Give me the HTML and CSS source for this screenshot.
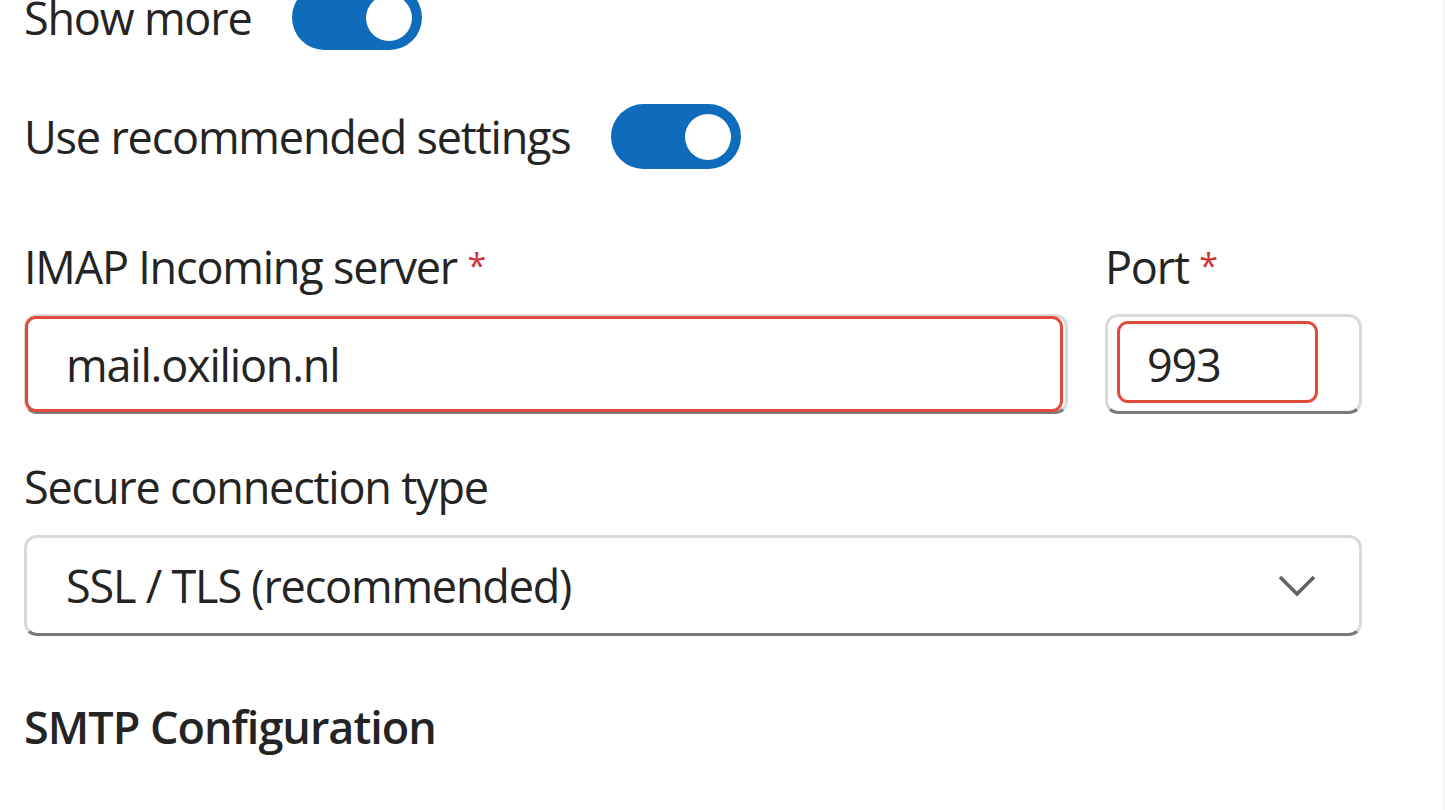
FILE: index.html
```html
<!DOCTYPE html>
<html lang="en">
<head>
  <meta charset="UTF-8" />
  <meta name="viewport" content="width=device-width, initial-scale=1.0">
  <title>Account settings</title>
  <link rel="stylesheet" href="styles.css">
</head>
<body>
  <div class="panel">
    <!-- Toggles -->
    <div class="toggle-row first">
      <span>Show more</span>
      <span class="toggle on"><span class="thumb"></span></span>
    </div>
    <div class="toggle-row">
      <span>Use recommended settings</span>
      <span class="toggle on"><span class="thumb"></span></span>
    </div>

    <!-- IMAP server + port -->
    <div class="field-row">
      <div class="field server">
        <label for="imap">IMAP Incoming server <span class="req">*</span></label>
        <div class="box">
          <input id="imap" type="text" value="mail.oxilion.nl">
          <span class="mark mark-server"></span>
        </div>
      </div>
      <div class="field port">
        <label for="port">Port <span class="req">*</span></label>
        <div class="box">
          <input id="port" type="text" value="993">
          <span class="mark mark-port"></span>
        </div>
      </div>
    </div>

    <!-- Connection type -->
    <div class="field conn">
      <label>Secure connection type</label>
      <div class="select">
        <span>SSL / TLS (recommended)</span>
        <svg width="40" height="24" viewBox="0 0 40 24"><path d="M3 3 L20 20 L37 3" fill="none" stroke="#616161" stroke-width="3.5"/></svg>
      </div>
    </div>

    <h3>SMTP Configuration</h3>
  </div>
</body>
</html>
```

FILE: styles.css
```css
* {
  box-sizing: border-box;
}
body {
  margin: 0;
  background: #fff;
  color: #242424;
  font-family: 'Open Sans', 'Noto Sans', sans-serif;
  font-size: 45px;
  letter-spacing: -1.2px;
  line-height: 64px;
  overflow: hidden;
  height: 810px;
  border-right: 2px solid #f4f4f4;
}
.panel {
  width: 1362px;
  padding-left: 24px;
}
.toggle-row {
  display: flex;
  align-items: center;
  gap: 40px;
  height: 65px;
  margin-top: 54px;
}
.toggle-row.first {
  margin-top: -15px;
}
.toggle {
  width: 130px;
  height: 65px;
  border-radius: 33px;
  background: #0f6cbd;
  display: flex;
  align-items: center;
  justify-content: flex-end;
  padding-right: 10px;
}
.thumb {
  width: 46px;
  height: 46px;
  border-radius: 50%;
  background: #fff;
}
.field-row {
  display: flex;
  gap: 37px;
  margin-top: 66px;
}
.field label {
  display: block;
  height: 64px;
  margin-bottom: 15px;
}
.server {
  width: 1044px;
}
.port {
  width: 257px;
}
.req {
  color: #d13438;
  font-size: 34px;
  line-height: 0;
  vertical-align: 6px;
}
.box {
  position: relative;
}
input, .select {
  display: block;
  width: 100%;
  height: 100px;
  border: 3px solid #dadada;
  border-bottom-color: #7a7a7a;
  border-radius: 13px;
  background: #fff;
  font: inherit;
  letter-spacing: inherit;
  color: #242424;
  padding: 0 0 0 39px;
  outline: none;
}
/* red annotation boxes drawn over the inputs */
.mark {
  position: absolute;
  border: 3px solid #e04b3a;
  border-radius: 11px;
  pointer-events: none;
}
.mark-server {
  top: 2px;
  left: 1px;
  right: 5px;
  bottom: 2px;
}
.mark-port {
  top: 7px;
  left: 12px;
  right: 44px;
  bottom: 11px;
}
.conn {
  margin-top: 41px;
}
.conn label {
  margin-bottom: 16px;
}
.select {
  height: 101px;
  display: flex;
  align-items: center;
  justify-content: space-between;
  padding-right: 42px;
}
h3 {
  margin: 59px 0 0;
  font-size: 45px;
  font-weight: 600;
  letter-spacing: -1px;
  line-height: 64px;
}
```
